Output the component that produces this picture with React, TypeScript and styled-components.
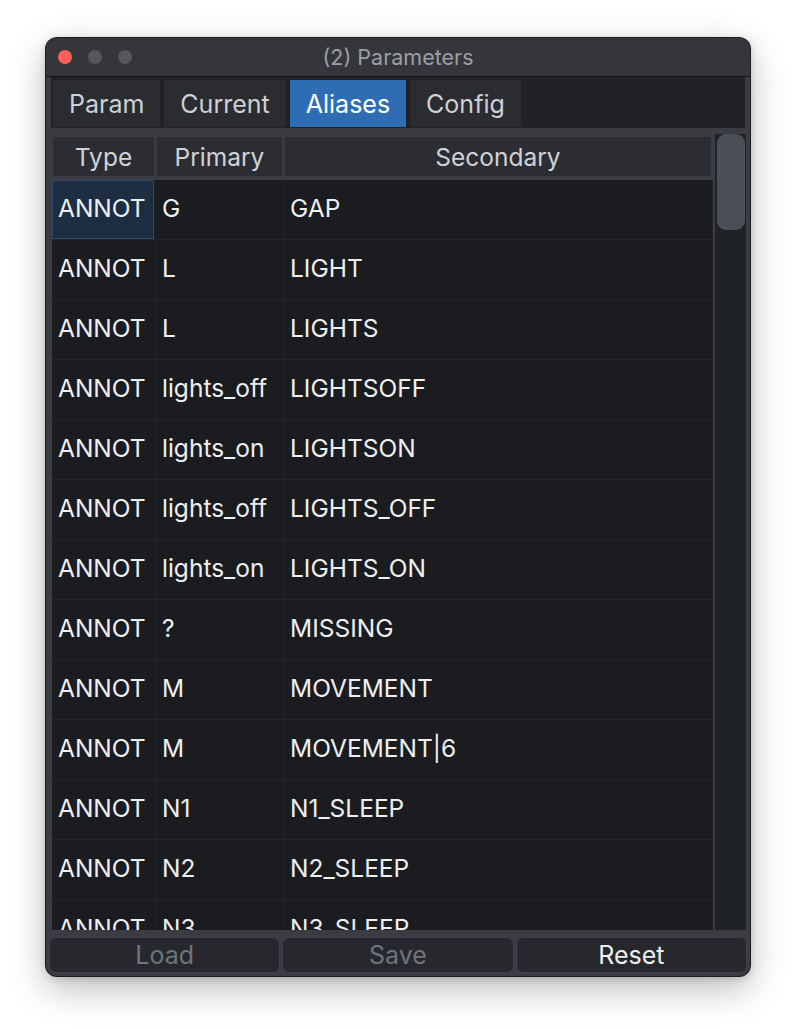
import styled, { createGlobalStyle } from "styled-components";

const GlobalStyle = createGlobalStyle`
  html, body {
    margin: 0;
    padding: 0;
    background: #ffffff;
  }
  body {
    font-family: Inter, "Noto Sans", "Liberation Sans", sans-serif;
  }
`;

const Page = styled.div`
  width: 796px;
  height: 1030px;
  padding: 38px 46px 0 46px;
  box-sizing: border-box;
`;

const Window = styled.div`
  width: 704px;
  height: 938px;
  border-radius: 11px;
  overflow: hidden;
  background: #3a3c42;
  box-shadow: 0 0 0 1px #1c1d20, 0 12px 36px rgba(0, 0, 0, 0.28), 0 2px 8px rgba(0, 0, 0, 0.18);
  display: flex;
  flex-direction: column;
`;

const TitleBar = styled.div`
  height: 38px;
  flex: none;
  background: #34363b;
  border-bottom: 1px solid #121315;
  display: flex;
  align-items: center;
  padding-left: 12px;
  position: relative;
`;

const Light = styled.span<{ color: string }>`
  width: 14px;
  height: 14px;
  border-radius: 50%;
  background: ${p => p.color};
  margin-right: 16px;
`;

const Title = styled.div`
  position: absolute;
  left: 0;
  right: 0;
  text-align: center;
  font-size: 21.5px;
  color: #9c9ea3;
  pointer-events: none;
`;

const TabBar = styled.div`
  display: flex;
  gap: 4px;
  background: #212226;
  padding: 3px 0 0 2px;
  margin: 0 5px;
  height: 48px;
  flex: none;
`;

const Tab = styled.div<{ active?: boolean }>`
  height: 47px;
  padding: 0 16px;
  display: flex;
  align-items: center;
  font-size: 25px;
  background: ${p => (p.active ? "#2e6db4" : "#2a2c30")};
  color: ${p => (p.active ? "#ffffff" : "#cdd0d5")};
`;

const Panel = styled.div`
  flex: 1;
  min-height: 0;
  display: flex;
  padding: 6px 4px 0 6px;
  gap: 2px;
`;

const TableArea = styled.div`
  flex: 1;
  display: flex;
  flex-direction: column;
  min-width: 0;
`;

const HeaderRow = styled.div`
  display: grid;
  grid-template-columns: 104px 128px 1fr;
  height: 46px;
  padding-top: 3px;
  box-sizing: border-box;
  flex: none;
`;

const HeaderCell = styled.div`
  margin: 0 2px 4px 1px;
  background: #2b2d32;
  color: #cfd2d6;
  font-size: 24.5px;
  display: flex;
  align-items: center;
  justify-content: center;
`;

const Body = styled.div`
  flex: 1;
  background: #1b1c1f;
  overflow: hidden;
  height: 750px;
`;

const Row = styled.div`
  display: grid;
  grid-template-columns: 104px 128px 1fr;
  height: 60px;
  border-bottom: 1px solid #25272b;
  box-sizing: border-box;
`;

const Cell = styled.div<{ selected?: boolean }>`
  display: flex;
  align-items: center;
  padding: 0 0 3px 6px;
  font-size: 24.5px;
  color: #eeeff1;
  white-space: nowrap;
  overflow: hidden;
  border-right: 1px solid #212327;
  box-sizing: border-box;
  background: ${p => (p.selected ? "#1d2e43" : "transparent")};
  outline: ${p => (p.selected ? "1px solid #2d4a6b" : "none")};
  outline-offset: -1px;
  margin-right: ${p => (p.selected ? "2px" : "0")};
`;

const ScrollTrack = styled.div`
  width: 31px;
  flex: none;
  background: #1f2226;
  padding: 0 1px 0 2px;
  box-sizing: border-box;
`;

const ScrollThumb = styled.div`
  height: 96px;
  background: #4a4e56;
  border-radius: 9px;
`;

const ButtonBar = styled.div`
  display: flex;
  gap: 2px;
  padding: 7px 3px 3px 3px;
  flex: none;
`;

const Button = styled.button<{ disabled?: boolean }>`
  flex: 1;
  height: 36px;
  background: #26282d;
  border: 1px solid #3f4248;
  border-radius: 7px;
  font-family: inherit;
  font-size: 25px;
  line-height: 34px;
  color: ${p => (p.disabled ? "#6e747d" : "#eceef0")};
  padding: 0 0 0 0;
`;

const rows: [string, string][] = [
  ["G", "GAP"],
  ["L", "LIGHT"],
  ["L", "LIGHTS"],
  ["lights_off", "LIGHTSOFF"],
  ["lights_on", "LIGHTSON"],
  ["lights_off", "LIGHTS_OFF"],
  ["lights_on", "LIGHTS_ON"],
  ["?", "MISSING"],
  ["M", "MOVEMENT"],
  ["M", "MOVEMENT|6"],
  ["N1", "N1_SLEEP"],
  ["N2", "N2_SLEEP"],
  ["N3", "N3_SLEEP"],
];

const tabs = ["Param", "Current", "Aliases", "Config"];

export default function App() {
  return (
    <Page>
      <GlobalStyle />
      <Window>
        <TitleBar>
          <Light color="#fe5f57" />
          <Light color="#55575c" />
          <Light color="#55575c" />
          <Title>(2) Parameters</Title>
        </TitleBar>
        <TabBar>
          {tabs.map(t => (
            <Tab key={t} active={t === "Aliases"}>{t}</Tab>
          ))}
        </TabBar>
        <Panel>
          <TableArea>
            <HeaderRow>
              <HeaderCell>Type</HeaderCell>
              <HeaderCell>Primary</HeaderCell>
              <HeaderCell>Secondary</HeaderCell>
            </HeaderRow>
            <Body>
              {rows.map(([primary, secondary], i) => (
                <Row key={i}>
                  <Cell selected={i === 0}>ANNOT</Cell>
                  <Cell>{primary}</Cell>
                  <Cell>{secondary}</Cell>
                </Row>
              ))}
            </Body>
          </TableArea>
          <ScrollTrack>
            <ScrollThumb />
          </ScrollTrack>
        </Panel>
        <ButtonBar>
          <Button disabled>Load</Button>
          <Button disabled>Save</Button>
          <Button>Reset</Button>
        </ButtonBar>
      </Window>
    </Page>
  );
}
